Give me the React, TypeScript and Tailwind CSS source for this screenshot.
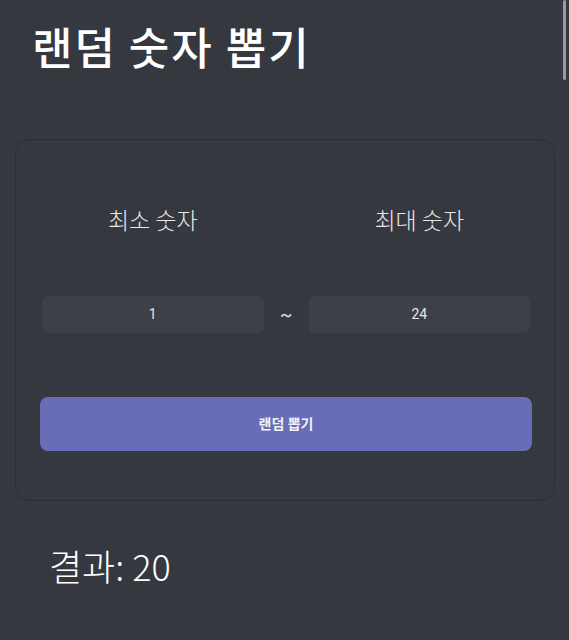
import React from "react";

export default function App() {
  const font = { fontFamily: '"Roboto", "Noto Sans CJK KR", sans-serif' };
  const cjk = { fontFamily: '"Noto Sans CJK KR", sans-serif' };
  return (
    <div
      className="relative w-[569px] h-[640px] overflow-hidden bg-[#36383f] text-white"
      style={font}
    >
      <div className="absolute right-[3px] top-0 w-[3px] h-[80px] rounded-full bg-[#9a9b9f]" />
      <div className="flex flex-col pl-[15px] pr-[14px]">
        <h1
          className="pl-[17px] mt-[18px] text-[44px] leading-[56px] font-medium tracking-[2px] text-white"
          style={cjk}
        >
          랜덤 숫자 뽑기
        </h1>
        <div className="mt-[65px] rounded-[14px] border border-[#2c2e33] bg-[#36383f] pl-[24px] pr-[22px] pt-[63px] pb-[49px] flex flex-col">
          <div className="mx-[2px] flex items-center h-[32px]" style={cjk}>
            <div className="flex-1 text-center text-[23px] leading-[32px] font-light text-[#e8e8ea]">
              최소 숫자
            </div>
            <div className="w-[45px]" />
            <div className="flex-1 text-center text-[23px] leading-[32px] font-light text-[#e8e8ea]">
              최대 숫자
            </div>
          </div>
          <div className="mx-[2px] mt-[61px] flex items-center h-[37px]">
            <div className="flex-1 h-[37px] rounded-[6px] bg-[#3e4048] flex items-center justify-center text-[14px] text-[#e6e6e8]">
              1
            </div>
            <div className="w-[45px] text-center text-[18px] text-[#e6e6e8]">~</div>
            <div className="flex-1 h-[37px] rounded-[6px] bg-[#3e4048] flex items-center justify-center text-[14px] text-[#e6e6e8]">
              24
            </div>
          </div>
          <button className="mt-[64px] h-[54px] rounded-[8px] bg-[#696cb6] text-[14px] font-bold text-[#f2f2f8]">
            랜덤 뽑기
          </button>
        </div>
        <div
          className="mt-[40px] pl-[34px] text-[36px] leading-[48px] font-light text-white"
          style={cjk}
        >
          결과: 20
        </div>
      </div>
    </div>
  );
}
